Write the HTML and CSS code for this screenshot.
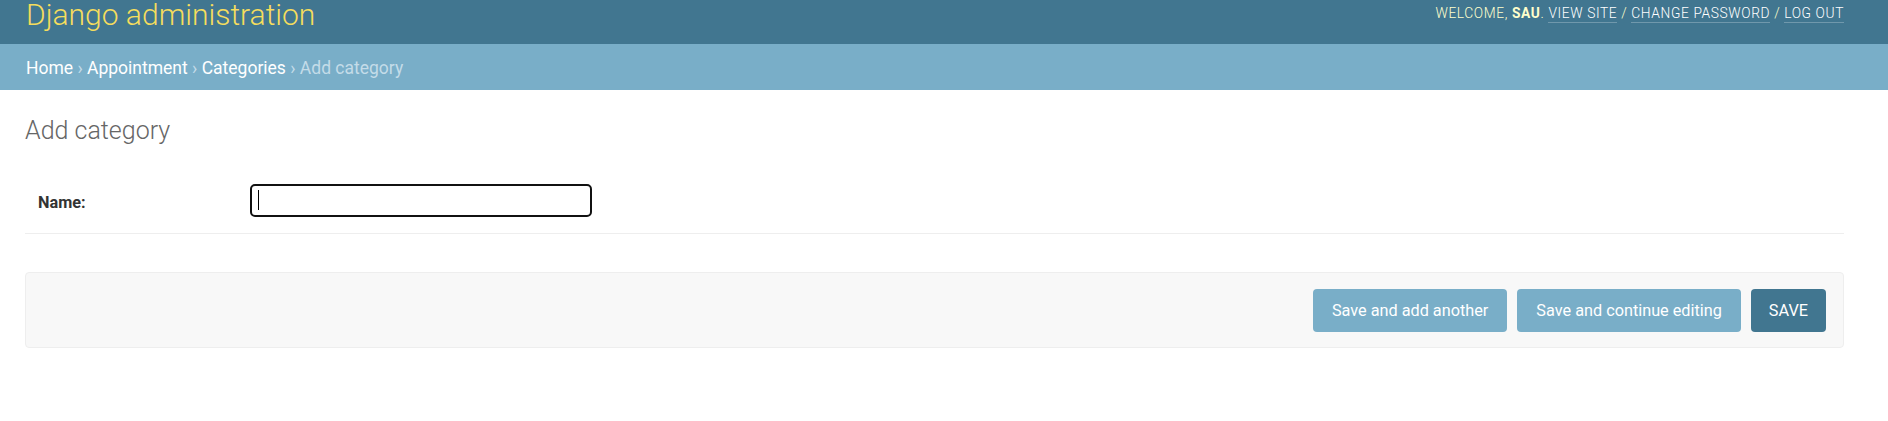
FILE: index.html
```html
<!DOCTYPE html>
<html lang="en">
<head>
<meta charset="utf-8">
<title>Add category | Django site admin</title>
<link rel="stylesheet" href="styles.css">
</head>
<body>
<div class="header">
  <h1 class="branding">Django administration</h1>
  <div class="user-tools">
    Welcome, <strong>sau</strong>. <a href="#">View site</a> / <a href="#">Change password</a> / <a href="#">Log out</a>
  </div>
</div>
<div class="breadcrumbs">
  <a href="#">Home</a> › <a href="#">Appointment</a> › <a href="#">Categories</a> › Add category
</div>
<div class="content">
  <h1 class="page-title">Add category</h1>
  <div class="form-row">
    <label class="required">Name:</label>
    <div class="text-input"><span class="caret"></span></div>
  </div>
  <div class="submit-row">
    <button class="btn">Save and add another</button>
    <button class="btn">Save and continue editing</button>
    <button class="btn default">Save</button>
  </div>
</div>
</body>
</html>
```
FILE: styles.css
```css
* { box-sizing: border-box; }
html, body { margin: 0; padding: 0; background: #fff; }
body {
  font-family: Roboto, "Liberation Sans", Arial, sans-serif;
  color: #333;
  font-size: 17.5px;
}
a { text-decoration: none; }

.header {
  height: 44px;
  background: #417690;
  display: flex;
  justify-content: space-between;
  align-items: flex-start;
  padding: 0 44px 0 26px;
}
.branding {
  margin: 0;
  font-size: 30px;
  font-weight: 300;
  line-height: 29px;
  color: #f5dd5d;
}
.user-tools {
  padding-top: 6px;
  font-size: 13.75px;
  line-height: 15px;
  font-weight: 300;
  color: #ffc;
  letter-spacing: 0.62px;
  text-transform: uppercase;
}
.user-tools strong { font-weight: 700; color: #ffc; }
.user-tools a {
  color: #fff;
  border-bottom: 1px solid rgba(255,255,255,0.25);
  padding-bottom: 1px;
}

.breadcrumbs {
  height: 46px;
  background: #79aec8;
  padding: 13px 26px 0;
  font-size: 17.5px;
  line-height: 22px;
  color: #c4dce8;
}
.breadcrumbs a { color: #fff; }

.content {
  padding: 26px 44px 0 25px;
}
.page-title {
  margin: 0 0 26px;
  font-size: 25px;
  font-weight: 300;
  line-height: 30px;
  color: #666;
}
.form-row {
  display: flex;
  align-items: flex-start;
  padding: 12px 13px 16px;
  border-bottom: 1px solid #eee;
}
.required {
  width: 212px;
  padding-top: 9px;
  font-size: 16.25px;
  line-height: 20px;
  font-weight: 700;
  color: #333;
}
.text-input {
  width: 342px;
  height: 33px;
  border: 2.5px solid #111;
  border-radius: 5px;
  padding: 4px 0 0 6px;
}
.caret {
  display: block;
  width: 1px;
  height: 20px;
  background: #000;
}

.submit-row {
  margin-top: 38px;
  height: 76px;
  background: #f8f8f8;
  border: 1px solid #eee;
  border-radius: 4px;
  padding: 16px 17px;
  display: flex;
  justify-content: flex-end;
  gap: 10px;
}
.btn {
  height: 43px;
  border: none;
  border-radius: 4px;
  background: #79aec8;
  color: #fff;
  font-family: Roboto, "Liberation Sans", Arial, sans-serif;
  font-size: 16.25px;
  padding: 0 19px;
  line-height: 43px;
}
.btn.default {
  background: #417690;
  text-transform: uppercase;
  padding: 0 18px;
}
```
